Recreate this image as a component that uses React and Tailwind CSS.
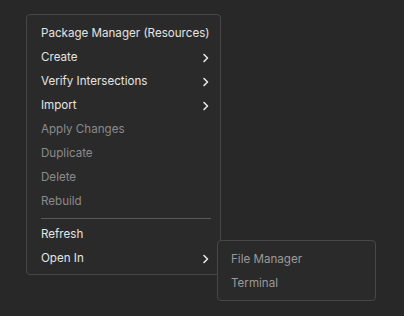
import React from "react";

function Chevron() {
  return (
    <svg width="8" height="10" viewBox="0 0 8 10" className="shrink-0">
      <path d="M2 1.5 L5.5 5 L2 8.5" fill="none" stroke="#e6e6e6" strokeWidth="1.6" strokeLinecap="round" strokeLinejoin="round" />
    </svg>
  );
}

function Row({ label, disabled, sub, children }) {
  return (
    <div className="relative flex h-6 items-center justify-between whitespace-nowrap pl-[14px] pr-[10px]">
      <span className={disabled ? "text-[#8a8a8a]" : "text-[#e4e4e4]"}>{label}</span>
      {sub && <Chevron />}
      {children}
    </div>
  );
}

export default function App() {
  return (
    <div
      className="h-[316px] w-[404px] bg-[#282828] pl-[26px] pt-[14px] text-[11.6px]"
      style={{ fontFamily: "Inter, 'Noto Sans', sans-serif" }}
    >
      <div className="w-[195px] rounded-[4px] border border-[#474747] bg-[#2a2a2a] pt-[7px] pb-[3px]">
        <Row label="Package Manager (Resources)" />
        <Row label="Create" sub />
        <Row label="Verify Intersections" sub />
        <Row label="Import" sub />
        <Row label="Apply Changes" disabled />
        <Row label="Duplicate" disabled />
        <Row label="Delete" disabled />
        <Row label="Rebuild" disabled />
        <div className="py-[4px] pl-[14px] pr-[9px]">
          <div className="h-px bg-[#5a5a5a]" />
        </div>
        <Row label="Refresh" />
        <Row label="Open In" sub>
          <div className="absolute left-[190px] top-[-7px] z-10 w-[159px] rounded-[4px] border border-[#474747] bg-[#2a2a2a] pt-[7px] pb-[4px]">
            <div className="flex h-6 items-center whitespace-nowrap pl-[13px] text-[#9a9a9a]">File Manager</div>
            <div className="flex h-6 items-center whitespace-nowrap pl-[13px] text-[#9a9a9a]">Terminal</div>
          </div>
        </Row>
      </div>
    </div>
  );
}
